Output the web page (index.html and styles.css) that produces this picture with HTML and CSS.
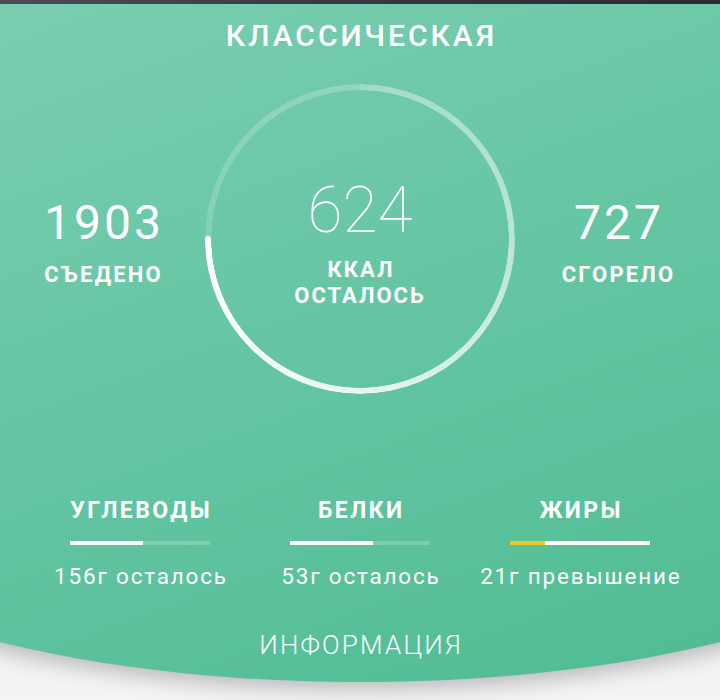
FILE: index.html
```html
<!DOCTYPE html>
<html lang="ru">
<head>
<meta charset="utf-8">
<title>Классическая</title>
<link rel="stylesheet" href="styles.css">
</head>
<body>
<div class="screen">
  <div class="statusbar"></div>
  <div class="panel">
    <h1 class="title">КЛАССИЧЕСКАЯ</h1>
    <div class="summary">
      <div class="stat">
        <div class="stat-num">1903</div>
        <div class="stat-label">СЪЕДЕНО</div>
      </div>
      <div class="dial">
        <div class="ring"></div>
        <div class="cap"></div>
        <div class="dial-text">
          <div class="remain">624</div>
          <div class="dial-label">ККАЛ<br>ОСТАЛОСЬ</div>
        </div>
      </div>
      <div class="stat">
        <div class="stat-num">727</div>
        <div class="stat-label">СГОРЕЛО</div>
      </div>
    </div>
    <div class="macros">
      <div class="macro">
        <div class="macro-name">УГЛЕВОДЫ</div>
        <div class="bar"><div class="fill" style="width:52%"></div></div>
        <div class="macro-note">156г осталось</div>
      </div>
      <div class="macro">
        <div class="macro-name">БЕЛКИ</div>
        <div class="bar"><div class="fill" style="width:59%"></div></div>
        <div class="macro-note">53г осталось</div>
      </div>
      <div class="macro">
        <div class="macro-name">ЖИРЫ</div>
        <div class="bar over"><div class="fill over" style="width:25%"></div></div>
        <div class="macro-note">21г превышение</div>
      </div>
    </div>
    <div class="info">ИНФОРМАЦИЯ</div>
  </div>
</div>
</body>
</html>
```

FILE: styles.css
```css
html, body {
  margin: 0;
  padding: 0;
}

body {
  background: #eeeef0;
  font-family: Roboto, "Noto Sans", "Liberation Sans", sans-serif;
  color: #fff;
}

.screen {
  width: 720px;
  height: 700px;
  overflow: hidden;
  display: flex;
  flex-direction: column;
  background: linear-gradient(180deg, #d6d6db 0%, #ececef 75%, #f4f4f6 100%);
}

.statusbar {
  flex: none;
  height: 4px;
  background: linear-gradient(90deg, #50525c 0%, #3a3c46 50%, #2c2e37 100%);
}

.panel {
  flex: none;
  align-self: flex-start;
  width: 720px;
  margin: 0 -240px;
  padding: 0 240px;
  background: linear-gradient(160deg, #7acdb0 0%, #66c6a4 45%, #50bc93 100%) content-box border-box no-repeat #5fc29f;
  border-radius: 0 0 600px 600px / 0 0 200px 200px;
  box-shadow: 0 6px 22px rgba(0, 0, 0, 0.26);
}

.title {
  margin: 14px 0 0;
  font-size: 30px;
  line-height: 36px;
  font-weight: 500;
  letter-spacing: 3px;
  text-indent: 3px;
  text-align: center;
}

.summary {
  display: grid;
  grid-template-columns: 1fr 310px 1fr;
  margin-top: 30px;
}

.stat {
  padding-top: 113px;
  text-align: center;
}

.stat-num {
  font-size: 48px;
  line-height: 52px;
  font-weight: 400;
  letter-spacing: 3px;
  text-indent: 3px;
}

.stat-label {
  margin-top: 13px;
  font-size: 22px;
  line-height: 26px;
  font-weight: 700;
  letter-spacing: 2.2px;
  text-indent: 2.2px;
}

.dial {
  display: grid;
  width: 310px;
  height: 310px;
}

.dial > * {
  grid-area: 1 / 1;
}

.ring {
  border-radius: 50%;
  background: conic-gradient(
    rgba(255, 255, 255, 0.34) 0deg,
    rgba(255, 255, 255, 0.55) 90deg,
    rgba(255, 255, 255, 0.85) 180deg,
    #ffffff 270deg,
    rgba(255, 255, 255, 0.16) 270deg,
    rgba(255, 255, 255, 0.24) 360deg
  );
  -webkit-mask: radial-gradient(closest-side, transparent calc(100% - 6.5px), #000 calc(100% - 6px));
  mask: radial-gradient(closest-side, transparent calc(100% - 6.5px), #000 calc(100% - 6px));
}

.cap {
  align-self: center;
  justify-self: start;
  width: 6px;
  height: 6px;
  border-radius: 50%;
  background: #fff;
}

.dial-text {
  padding-top: 95px;
  text-align: center;
}

.remain {
  font-size: 64px;
  line-height: 64px;
  font-weight: 100;
}

.dial-label {
  margin-top: 14px;
  font-size: 22px;
  line-height: 26px;
  font-weight: 700;
  letter-spacing: 2px;
  text-indent: 2px;
}

.macros {
  display: grid;
  grid-template-columns: repeat(3, 220px);
  justify-content: center;
  margin-top: 104px;
  text-align: center;
}

.macro-name {
  font-size: 23px;
  line-height: 26px;
  font-weight: 700;
  letter-spacing: 2.4px;
  text-indent: 2.4px;
}

.bar {
  display: flex;
  width: 140px;
  height: 4px;
  margin: 17px auto 0;
  background: rgba(255, 255, 255, 0.2);
}

.bar.over {
  background: #fff;
}

.fill {
  height: 100%;
  background: #fff;
}

.fill.over {
  background: #f2c52a;
}

.macro-note {
  margin-top: 18px;
  font-size: 22.5px;
  line-height: 26px;
  font-weight: 400;
  letter-spacing: 1.8px;
  text-indent: 1.8px;
}

.info {
  margin: 41px 0 22px;
  font-size: 26px;
  line-height: 30px;
  font-weight: 300;
  letter-spacing: 2.2px;
  text-indent: 2.2px;
  text-align: center;
}
```
